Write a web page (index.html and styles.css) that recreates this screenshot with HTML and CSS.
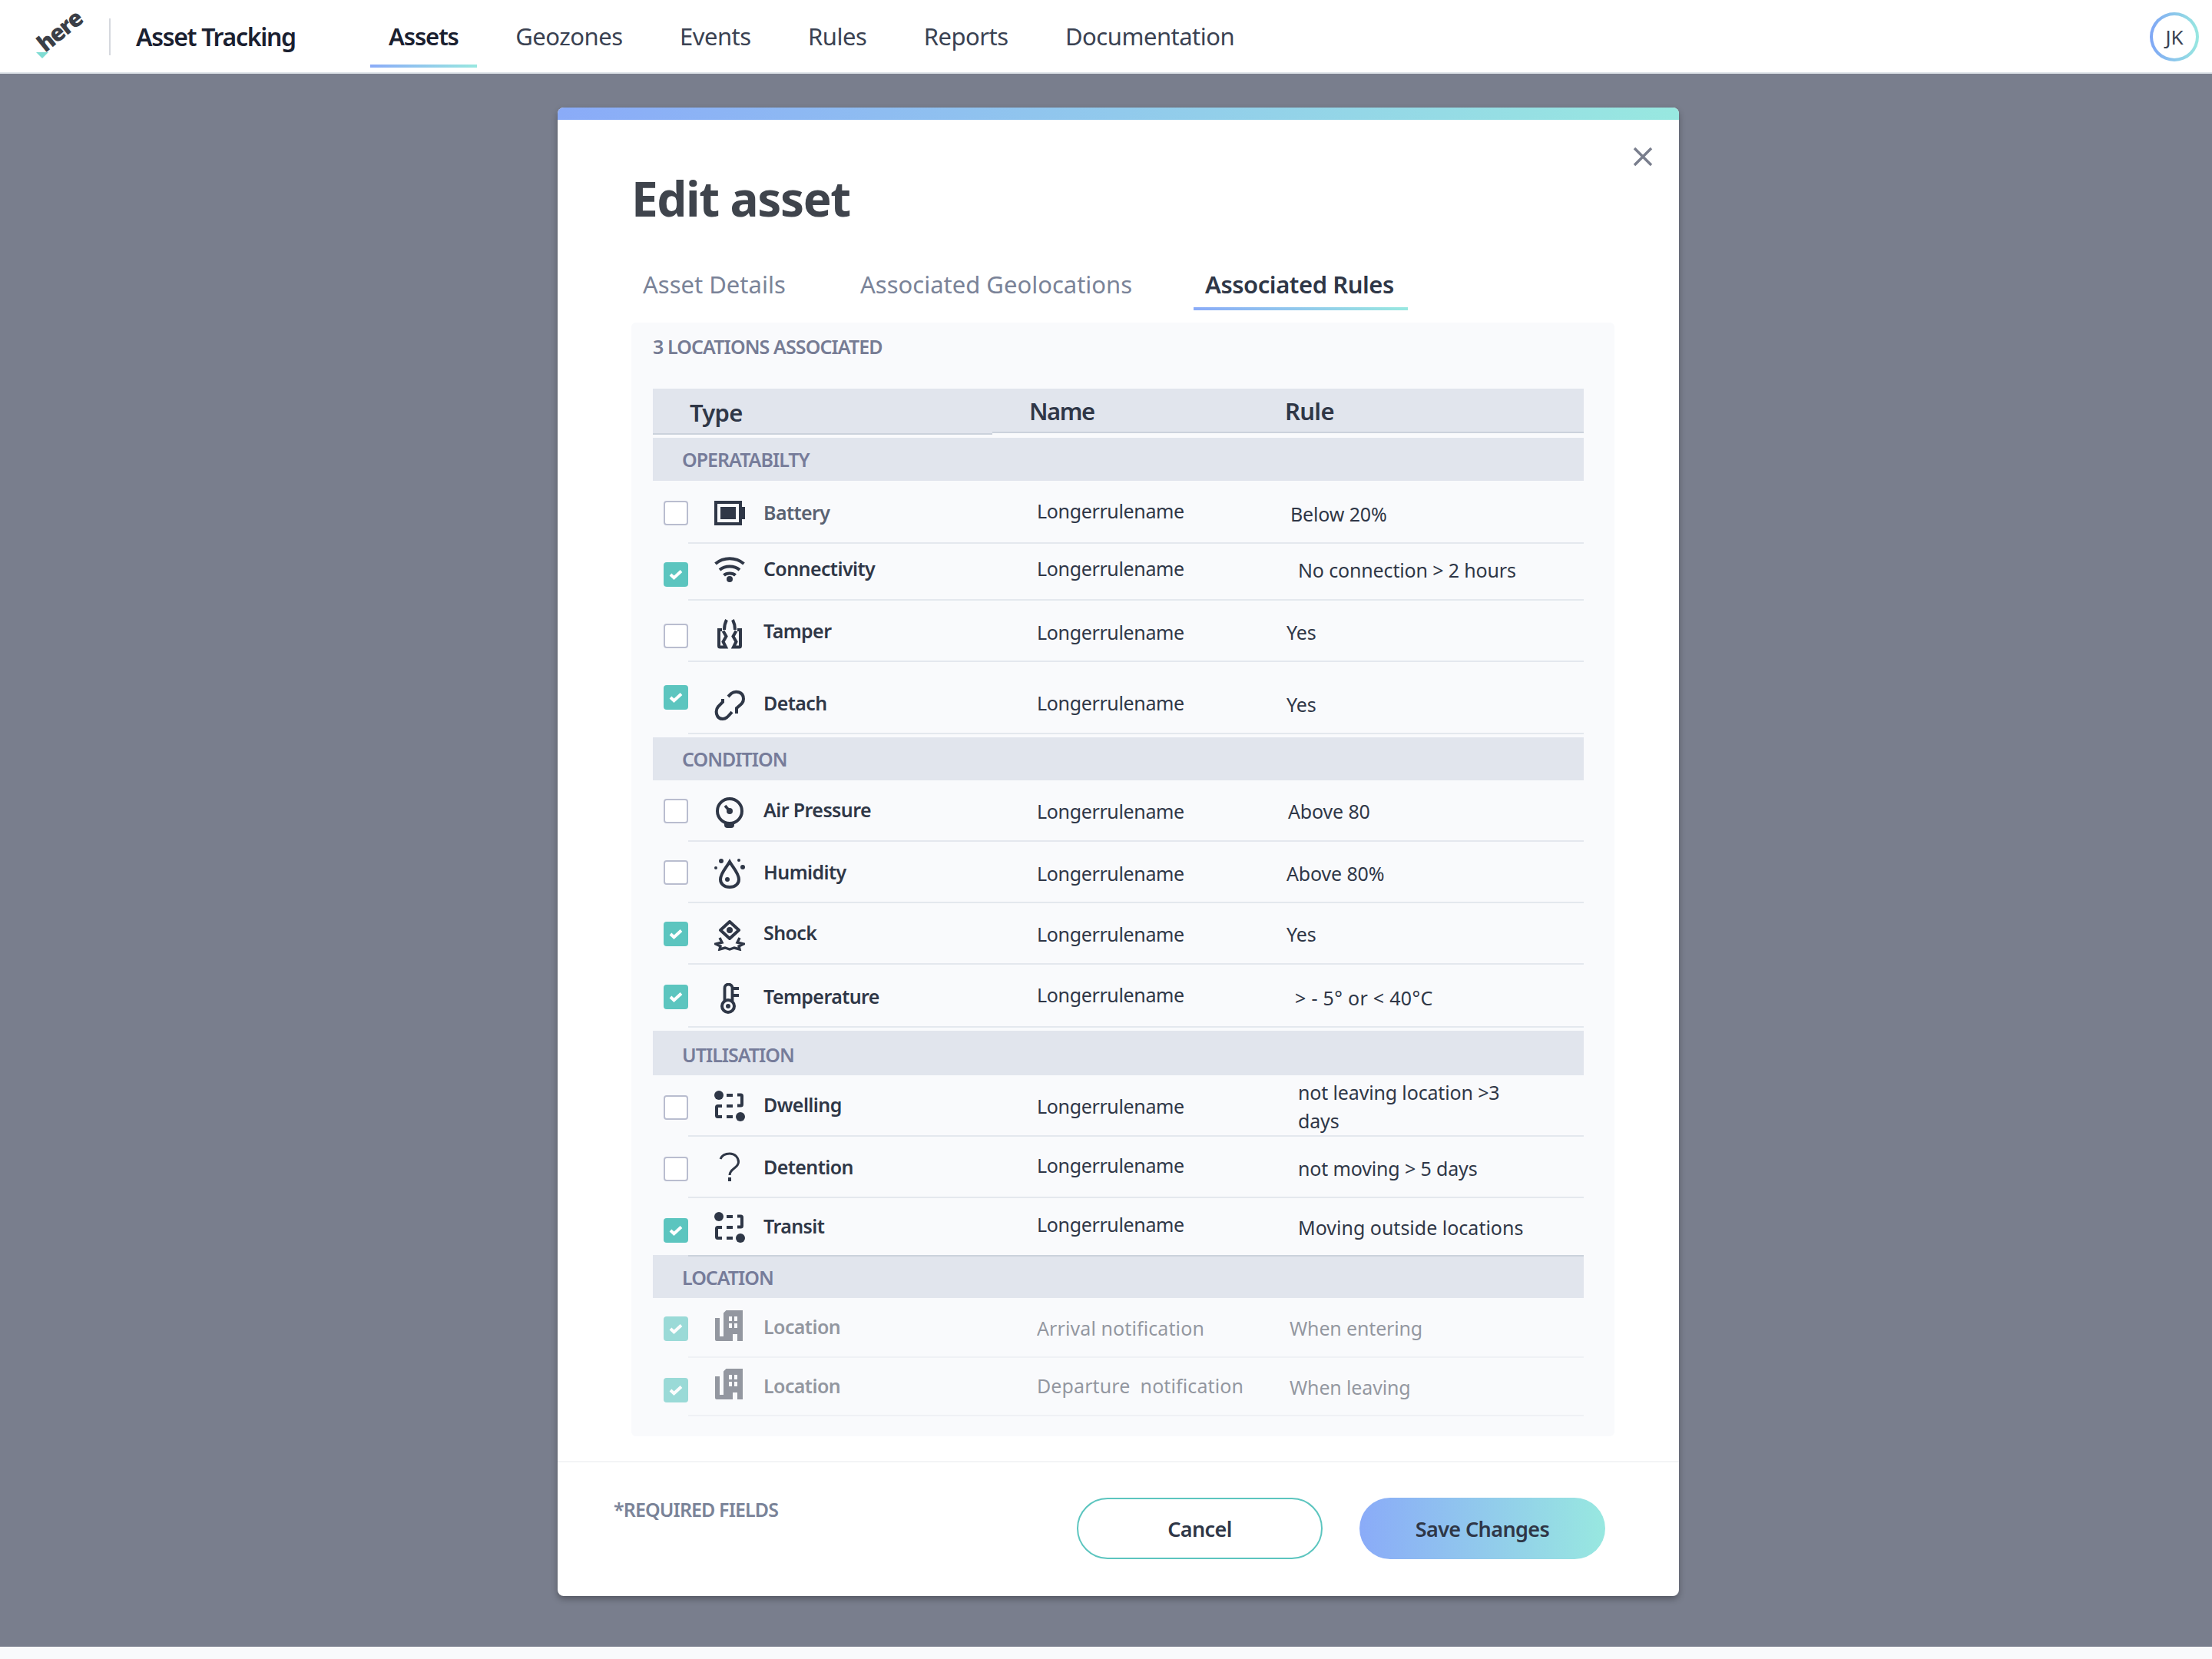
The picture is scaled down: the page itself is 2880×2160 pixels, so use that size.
FILE: index.html
```html
<!DOCTYPE html>
<html>
<head>
  <meta name="viewport" content="width=device-width, initial-scale=1.0">
  <title>Asset Tracking - Edit asset</title>
  <link rel="stylesheet" href="styles.css">
</head>

<body>
  <svg class="icon-defs" aria-hidden="true">
    <symbol id="tick" viewBox="0 0 32 32">
      <path d="M9 16l4.500 4.300L23 11.500" fill="none" stroke="#fff" stroke-width="4" />
    </symbol>
    <symbol id="route" viewBox="0 0 40 40">
      <circle cx="6" cy="6" r="6" fill="currentColor" />
      <circle cx="34" cy="34" r="6" fill="currentColor" />
      <path d="M16 6h8M30 5.5h4.5a1.5 1.5 0 0 1 1.5 1.5v11a1.5 1.5 0 0 1-1.5 1.5H30M16 20h8M10 20H4.500a1.500 1.500 0 0 0-1.500 1.500v11a1.500 1.500 0 0 0 1.500 1.500H10M16 34h8" fill="none" stroke="currentColor" stroke-width="4" />
    </symbol>
    <symbol id="building" viewBox="0 0 40 40">
      <path d="M1 10h6v24h5v6H3a2 2 0 0 1-2-2z" fill="currentColor" />
      <path d="M12 3.500L15.500 0H37v40h-7v-9h-6v9H12z" fill="currentColor" />
      <path d="M19 8h4v6h-4zM26 8h4v6h-4zM19 17h4v6h-4zM26 17h4v6h-4z" fill="#f9fafc" />
    </symbol>
  </svg>

  <div class="page">
    <header class="topbar">
      <svg class="logo" viewBox="0 0 80 94" width="80" height="94">
        <text class="logo-word" transform="translate(23 69) rotate(-39)">here</text>
        <path d="M11 68h16l-8 8z" fill="#7fdcd3" />
      </svg>
      <span class="app-name">Asset Tracking</span>
      <nav class="nav">
        <a class="nav-item active">Assets</a>
        <a class="nav-item">Geozones</a>
        <a class="nav-item">Events</a>
        <a class="nav-item">Rules</a>
        <a class="nav-item">Reports</a>
        <a class="nav-item">Documentation</a>
      </nav>
      <div class="avatar"><span>JK</span></div>
    </header>

    <div class="modal">
      <div class="modal-bar"></div>
      <svg class="close" viewBox="0 0 26 26" width="26" height="26">
        <path d="M2 2l22 22M24 2L2 24" stroke="currentColor" stroke-width="3.500" fill="none" />
      </svg>

      <h1 class="title">Edit asset</h1>

      <div class="tabs">
        <a class="tab tab-details">Asset Details</a>
        <a class="tab tab-geo">Associated Geolocations</a>
        <a class="tab tab-rules active">Associated Rules</a>
      </div>

      <div class="panel">
        <div class="count">3 LOCATIONS ASSOCIATED</div>

        <div class="table-head">
          <div class="head-type">Type</div>
          <div class="head-name">Name</div>
          <div class="head-rule">Rule</div>
        </div>

        <div class="group">OPERATABILTY</div>

        <div class="row row-battery">
          <div class="check"></div>
          <div class="row-body">
            <svg class="icon" viewBox="0 0 40 40">
              <path d="M2 6h32v28H2z" fill="none" stroke="currentColor" stroke-width="4" />
              <path d="M8 12h20v16H8zM36 12h4v16h-4z" fill="currentColor" />
            </svg>
            <div class="type">Battery</div>
            <div class="name">Longerrulename</div>
            <div class="rule">Below 20%</div>
          </div>
        </div>

        <div class="row row-connectivity">
          <div class="check on"><svg><use href="#tick" /></svg></div>
          <div class="row-body">
            <svg class="icon" viewBox="0 0 40 40">
              <path d="M1.500 12C12 3 28 3 38.500 12M7 20c7-6 19-6 26 0M12.500 27c3.500-3.500 11.500-3.500 15 0" fill="none" stroke="currentColor" stroke-width="4" />
              <circle cx="20" cy="32" r="4" fill="currentColor" />
            </svg>
            <div class="type">Connectivity</div>
            <div class="name">Longerrulename</div>
            <div class="rule">No connection &gt; 2 hours</div>
          </div>
        </div>

        <div class="row row-tamper">
          <div class="check"></div>
          <div class="row-body">
            <svg class="icon" viewBox="0 0 40 40">
              <path d="M16 2c-2 4-3 8-3 13M24 2c2 4 3 8 3 13M10 15H6v21a1.500 1.500 0 0 0 1.500 1.500H15l-3.500-7 4-7-4-7M30 15h4v21a1.500 1.500 0 0 1-1.500 1.500H25l3.500-7-4-7 4-7" fill="none" stroke="currentColor" stroke-width="4" />
            </svg>
            <div class="type">Tamper</div>
            <div class="name">Longerrulename</div>
            <div class="rule">Yes</div>
          </div>
        </div>

        <div class="row row-detach">
          <div class="check on"><svg><use href="#tick" /></svg></div>
          <div class="row-body">
            <svg class="icon" viewBox="0 0 40 40">
              <path d="M11 12v4l-6 6c-4 5-3 16 6 16 4 0 6-2 12-9M18 9l4-4c5-4 16-3 16 7 0 5-3 7-9 12v7" fill="none" stroke="currentColor" stroke-width="4" />
            </svg>
            <div class="type">Detach</div>
            <div class="name">Longerrulename</div>
            <div class="rule">Yes</div>
          </div>
        </div>

        <div class="group">CONDITION</div>

        <div class="row row-pressure">
          <div class="check"></div>
          <div class="row-body">
            <svg class="icon" viewBox="0 0 40 40">
              <circle cx="20" cy="18" r="16" fill="none" stroke="currentColor" stroke-width="4" />
              <path d="M13 34h13v2a4 4 0 0 1-4 4h-5a4 4 0 0 1-4-4z" fill="currentColor" />
              <path d="M14 11l6 7" stroke="currentColor" stroke-width="3.500" />
              <circle cx="20" cy="18" r="4" fill="currentColor" />
            </svg>
            <div class="type">Air Pressure</div>
            <div class="name">Longerrulename</div>
            <div class="rule">Above 80</div>
          </div>
        </div>

        <div class="row row-humidity">
          <div class="check"></div>
          <div class="row-body">
            <svg class="icon" viewBox="0 0 40 40">
              <path d="M20 4c-4 7-12 15-12 23 0 6 5 10 12 10s12-4 12-10c0-8-8-16-12-23z" fill="none" stroke="currentColor" stroke-width="4" />
              <circle cx="17" cy="27" r="3" fill="currentColor" />
              <circle cx="9" cy="3" r="3" fill="currentColor" />
              <circle cx="2" cy="12" r="2" fill="currentColor" />
              <circle cx="32" cy="2" r="2" fill="currentColor" />
              <circle cx="37" cy="11" r="3" fill="currentColor" />
            </svg>
            <div class="type">Humidity</div>
            <div class="name">Longerrulename</div>
            <div class="rule">Above 80%</div>
          </div>
        </div>

        <div class="row row-shock">
          <div class="check on"><svg><use href="#tick" /></svg></div>
          <div class="row-body">
            <svg class="icon" viewBox="0 0 40 40">
              <path d="M20 2l12 11-12 11L8 13z" fill="none" stroke="currentColor" stroke-width="4" stroke-linejoin="round" />
              <circle cx="20" cy="13" r="4" fill="currentColor" />
              <path d="M7 23l3 6-8 2 6 3-1 4 7-2 6 2 6-2 7 2-1-4 6-3-8-2 3-6" fill="none" stroke="currentColor" stroke-width="3.400" />
            </svg>
            <div class="type">Shock</div>
            <div class="name">Longerrulename</div>
            <div class="rule">Yes</div>
          </div>
        </div>

        <div class="row row-temperature">
          <div class="check on"><svg><use href="#tick" /></svg></div>
          <div class="row-body">
            <svg class="icon" viewBox="0 0 40 40">
              <path d="M13.500 23V6.500a5 5 0 0 1 10 0V23.500M24 7h8M24 16h8" fill="none" stroke="currentColor" stroke-width="3.800" />
              <circle cx="18" cy="30" r="8" fill="none" stroke="currentColor" stroke-width="4" />
              <circle cx="18" cy="30" r="3" fill="currentColor" />
            </svg>
            <div class="type">Temperature</div>
            <div class="name">Longerrulename</div>
            <div class="rule">&gt; - 5° or &lt; 40°C</div>
          </div>
        </div>

        <div class="group group-low">UTILISATION</div>

        <div class="row row-dwelling">
          <div class="check"></div>
          <div class="row-body">
            <svg class="icon"><use href="#route" /></svg>
            <div class="type">Dwelling</div>
            <div class="name">Longerrulename</div>
            <div class="rule">not leaving location &gt;3 days</div>
          </div>
        </div>

        <div class="row row-detention">
          <div class="check"></div>
          <div class="row-body">
            <svg class="icon" viewBox="0 0 40 40">
              <path d="M8 9c2-5 7-7 12-7 7 0 11.500 5 11.500 11 0 8-11.500 8-11.500 17" fill="none" stroke="currentColor" stroke-width="3" />
              <path d="M18 33h4v5h-4z" fill="currentColor" />
            </svg>
            <div class="type">Detention</div>
            <div class="name">Longerrulename</div>
            <div class="rule">not moving &gt; 5 days</div>
          </div>
        </div>

        <div class="row row-transit">
          <div class="check on"><svg><use href="#tick" /></svg></div>
          <div class="row-body">
            <svg class="icon"><use href="#route" /></svg>
            <div class="type">Transit</div>
            <div class="name">Longerrulename</div>
            <div class="rule">Moving outside locations</div>
          </div>
        </div>

        <div class="group group-location">LOCATION</div>

        <div class="row row-muted row-arrival">
          <div class="check on"><svg><use href="#tick" /></svg></div>
          <div class="row-body">
            <svg class="icon"><use href="#building" /></svg>
            <div class="type">Location</div>
            <div class="name">Arrival notification</div>
            <div class="rule">When entering</div>
          </div>
        </div>

        <div class="row row-muted row-departure">
          <div class="check on"><svg><use href="#tick" /></svg></div>
          <div class="row-body">
            <svg class="icon"><use href="#building" /></svg>
            <div class="type">Location</div>
            <div class="name">Departure&nbsp; notification</div>
            <div class="rule">When leaving</div>
          </div>
        </div>
      </div>

      <div class="modal-footer">
        <span class="required">*REQUIRED FIELDS</span>
        <div class="actions">
          <button class="btn btn-cancel" type="button">Cancel</button>
          <button class="btn btn-save" type="button">Save Changes</button>
        </div>
      </div>
    </div>
  </div>
</body>
</html>
```

FILE: styles.css
```css
body {
  font-family: "Noto Sans", Arial, sans-serif;
  background-color: #f9fafc;
  color: #2f3747;
  margin: 0;
  padding: 0;
}

.icon-defs {
  display: none;
}

.page {
  height: 2144px;
  background-color: #797e8d;
  overflow: hidden;
}

/* top bar */
.topbar {
  height: 96px;
  box-sizing: border-box;
  background-color: #fff;
  border-bottom: 2px solid #dfe4ea;
  display: flex;
  align-items: flex-start;
  padding-left: 36px;
}

.logo {
  margin-right: 26px;
}

.logo-word {
  font-family: "Open Sans", sans-serif;
  font-size: 30px;
  font-weight: 800;
  letter-spacing: -1.500px;
  fill: #3b3f47;
}

.app-name {
  font-size: 32px;
  font-weight: 600;
  line-height: 48px;
  margin-top: 24px;
  padding-left: 33px;
  width: 340px;
  box-sizing: border-box;
  border-left: 2px solid #d5d8de;
  color: #1a2030;
  letter-spacing: -1.3px;
}

.nav {
  display: flex;
  gap: 26.4px;
}

.nav-item {
  font-size: 31px;
  line-height: 46px;
  padding: 24px 24px 0;
  height: 88px;
  box-sizing: border-box;
  color: #3a4252;
  letter-spacing: -0.5px;
}

.nav-item.active {
  font-weight: 600;
  color: #1a2030;
  letter-spacing: -1.1px;
  border-bottom: 4px solid;
  border-image: linear-gradient(90deg, #8aabf8, #98e8e0) 1;
}

.avatar {
  width: 64px;
  height: 64px;
  box-sizing: border-box;
  margin: 16px 17px 0 auto;
  padding: 4px;
  border-radius: 50%;
  background: linear-gradient(90deg, #7fa6f6, #98e8e0);
}

.avatar span {
  display: block;
  height: 56px;
  line-height: 56px;
  text-align: center;
  border-radius: 50%;
  background-color: #fff;
  font-size: 26px;
  color: #3a4252;
}

/* modal */
.modal {
  position: relative;
  width: 1460px;
  height: 1938px;
  margin: 44px 0 0 726px;
  background-color: #fff;
  border-radius: 8px;
  overflow: hidden;
  box-shadow: 0 4px 8px rgba(0, 0, 0, 0.3);
}

.modal-bar {
  height: 16px;
  background: linear-gradient(90deg, #8aabf8, #98e8e0);
}

.close {
  position: absolute;
  top: 51px;
  right: 34px;
  color: #797e8d;
}

.title {
  margin: 60px 0 0 96px;
  font-size: 62px;
  line-height: 84px;
  font-weight: 700;
  color: #3f444c;
  letter-spacing: -1.4px;
}

.tabs {
  display: flex;
  margin: 40px 0 0 96px;
  height: 64px;
  box-sizing: border-box;
}

.tab {
  font-size: 31px;
  line-height: 60px;
  padding-left: 15px;
  box-sizing: border-box;
  color: #7a8398;
}

.tab-details {
  width: 283px;
}

.tab-geo {
  width: 449px;
}

.tab-rules {
  width: 279px;
}

.tab.active {
  font-weight: 600;
  color: #2f3747;
  letter-spacing: -0.45px;
  border-bottom: 4px solid;
  border-image: linear-gradient(90deg, #8aabf8, #98e8e0) 1;
}

.panel {
  width: 1280px;
  height: 1450px;
  box-sizing: border-box;
  margin: 16px 0 0 96px;
  padding: 15px 40px 0 28px;
  background-color: #f9fafc;
  border-radius: 6px;
}

.count {
  font-size: 25px;
  font-weight: 600;
  line-height: 32px;
  color: #767c94;
  letter-spacing: -0.9px;
  margin-bottom: 39px;
}

/* table */
.table-head {
  display: flex;
  align-items: flex-start;
  font-size: 31px;
  font-weight: 600;
  line-height: 40px;
  letter-spacing: -0.7px;
  margin-bottom: 4px;
}

.head-type,
.head-name,
.head-rule {
  background-color: #e1e5ed;
  box-sizing: border-box;
  border-bottom: 2px solid #cbd2dc;
}

.head-type {
  width: 442px;
  height: 60px;
  padding: 11px 0 0 48px;
}

.head-name {
  width: 381px;
  height: 58px;
  padding: 9px 0 0 48px;
  letter-spacing: -1.5px;
}

.head-rule {
  flex: 1;
  height: 58px;
  padding-top: 9px;
}

.group {
  height: 56px;
  box-sizing: border-box;
  display: flex;
  align-items: center;
  padding-left: 38px;
  margin-top: 4px;
  background-color: #e1e5ed;
  font-size: 25px;
  font-weight: 600;
  letter-spacing: -1px;
  color: #767c9a;
}

.group-low {
  height: 58px;
  padding-top: 4px;
}

.row + .group-location {
  margin-top: 0;
  padding-top: 2px;
}

.row {
  display: flex;
  align-items: flex-start;
  height: var(--h);
}

.row-transit {
  position: relative;
  margin-bottom: -2px;
}

.row-transit .row-body {
  border-bottom-color: #cbd2dc;
}

.check {
  width: 32px;
  height: 32px;
  box-sizing: border-box;
  flex: none;
  margin: var(--check) 0 0 14px;
  background-color: #fff;
  border: 2px solid #b9bdcf;
  border-radius: 4px;
}

.check.on {
  background-color: #5cc5bf;
  border: none;
}

.check svg {
  display: block;
  width: 32px;
  height: 32px;
}

.row-body {
  flex: 1;
  height: 100%;
  box-sizing: border-box;
  padding-left: 34px;
  border-bottom: 2px solid #e4e8ee;
  display: grid;
  grid-template-columns: 64px 356px 325px 1fr;
  align-items: start;
  font-size: 25px;
  line-height: 32px;
}

.icon {
  display: block;
  width: 40px;
  height: 40px;
  margin-top: var(--icon);
}

.type {
  font-weight: 600;
  letter-spacing: -0.6px;
  margin-top: var(--type);
}

.name {
  letter-spacing: -0.35px;
  margin-top: var(--name);
}

.rule {
  letter-spacing: -0.15px;
  margin-top: var(--rule);
  margin-left: var(--rule-x, 0);
}

.row-battery .type {
  color: #5a6272;
}

.row-temperature .rule {
  letter-spacing: 0.3px;
}

.row-transit .rule {
  letter-spacing: 0;
}

.row-muted .name {
  letter-spacing: 0.1px;
}

.row-muted .row-body {
  border-bottom-color: #eff1f5;
}

.row-muted .check {
  opacity: 0.6;
}

.row-muted .row-body > * {
  opacity: 0.5;
}

.row-battery { --h: 82px; --check: 26px; --icon: 22px; --type: 25px; --name: 23px; --rule: 27px; --rule-x: 5px; }
.row-connectivity { --h: 74px; --check: 24px; --icon: 14px; --type: 16px; --name: 16px; --rule: 18px; --rule-x: 15px; }
.row-tamper { --h: 80px; --check: 30px; --icon: 23px; --type: 23px; --name: 25px; --rule: 25px; }
.row-detach { --h: 94px; --check: 30px; --icon: 36px; --type: 37px; --name: 37px; --rule: 39px; }
.row-pressure { --h: 80px; --check: 24px; --icon: 22px; --type: 22px; --name: 24px; --rule: 24px; --rule-x: 2px; }
.row-humidity { --h: 80px; --check: 24px; --icon: 22px; --type: 23px; --name: 25px; --rule: 25px; }
.row-shock { --h: 80px; --check: 24px; --icon: 22px; --type: 22px; --name: 24px; --rule: 24px; }
.row-temperature { --h: 82px; --check: 26px; --icon: 24px; --type: 25px; --name: 23px; --rule: 27px; --rule-x: 11px; }
.row-dwelling { --h: 80px; --check: 26px; --icon: 20px; --type: 22px; --name: 24px; --rule: 4px; --rule-x: 15px; }
.row-detention { --h: 80px; --check: 26px; --icon: 20px; --type: 23px; --name: 21px; --rule: 25px; --rule-x: 15px; }
.row-transit { --h: 76px; --check: 26px; --icon: 18px; --type: 20px; --name: 18px; --rule: 22px; --rule-x: 15px; }
.row-arrival { --h: 78px; --check: 24px; --icon: 16px; --type: 21px; --name: 23px; --rule: 23px; --rule-x: 4px; }
.row-departure { --h: 76px; --check: 26px; --icon: 14px; --type: 20px; --name: 20px; --rule: 22px; --rule-x: 4px; }

.row-dwelling .rule {
  width: 290px;
  line-height: 37px;
}

/* footer */
.modal-footer {
  display: flex;
  align-items: flex-start;
  margin-top: 32px;
  height: 174px;
  box-sizing: border-box;
  border-top: 2px solid #f3f4f6;
  padding: 46px 96px 0 73px;
}

.required {
  font-size: 25px;
  font-weight: 600;
  line-height: 32px;
  margin-top: -1px;
  letter-spacing: -0.9px;
  color: #7a8398;
}

.actions {
  display: flex;
  gap: 48px;
  margin-left: auto;
}

.btn {
  width: 320px;
  height: 80px;
  border-radius: 40px;
  font-family: inherit;
  font-size: 27px;
  font-weight: 600;
  letter-spacing: -0.6px;
  color: #2f3747;
  cursor: pointer;
  border: none;
}

.btn-cancel {
  background-color: #fff;
  border: 2px solid #5cc5bf;
}

.btn-save {
  background: linear-gradient(90deg, #8aabf8, #98e8e0);
}
```
